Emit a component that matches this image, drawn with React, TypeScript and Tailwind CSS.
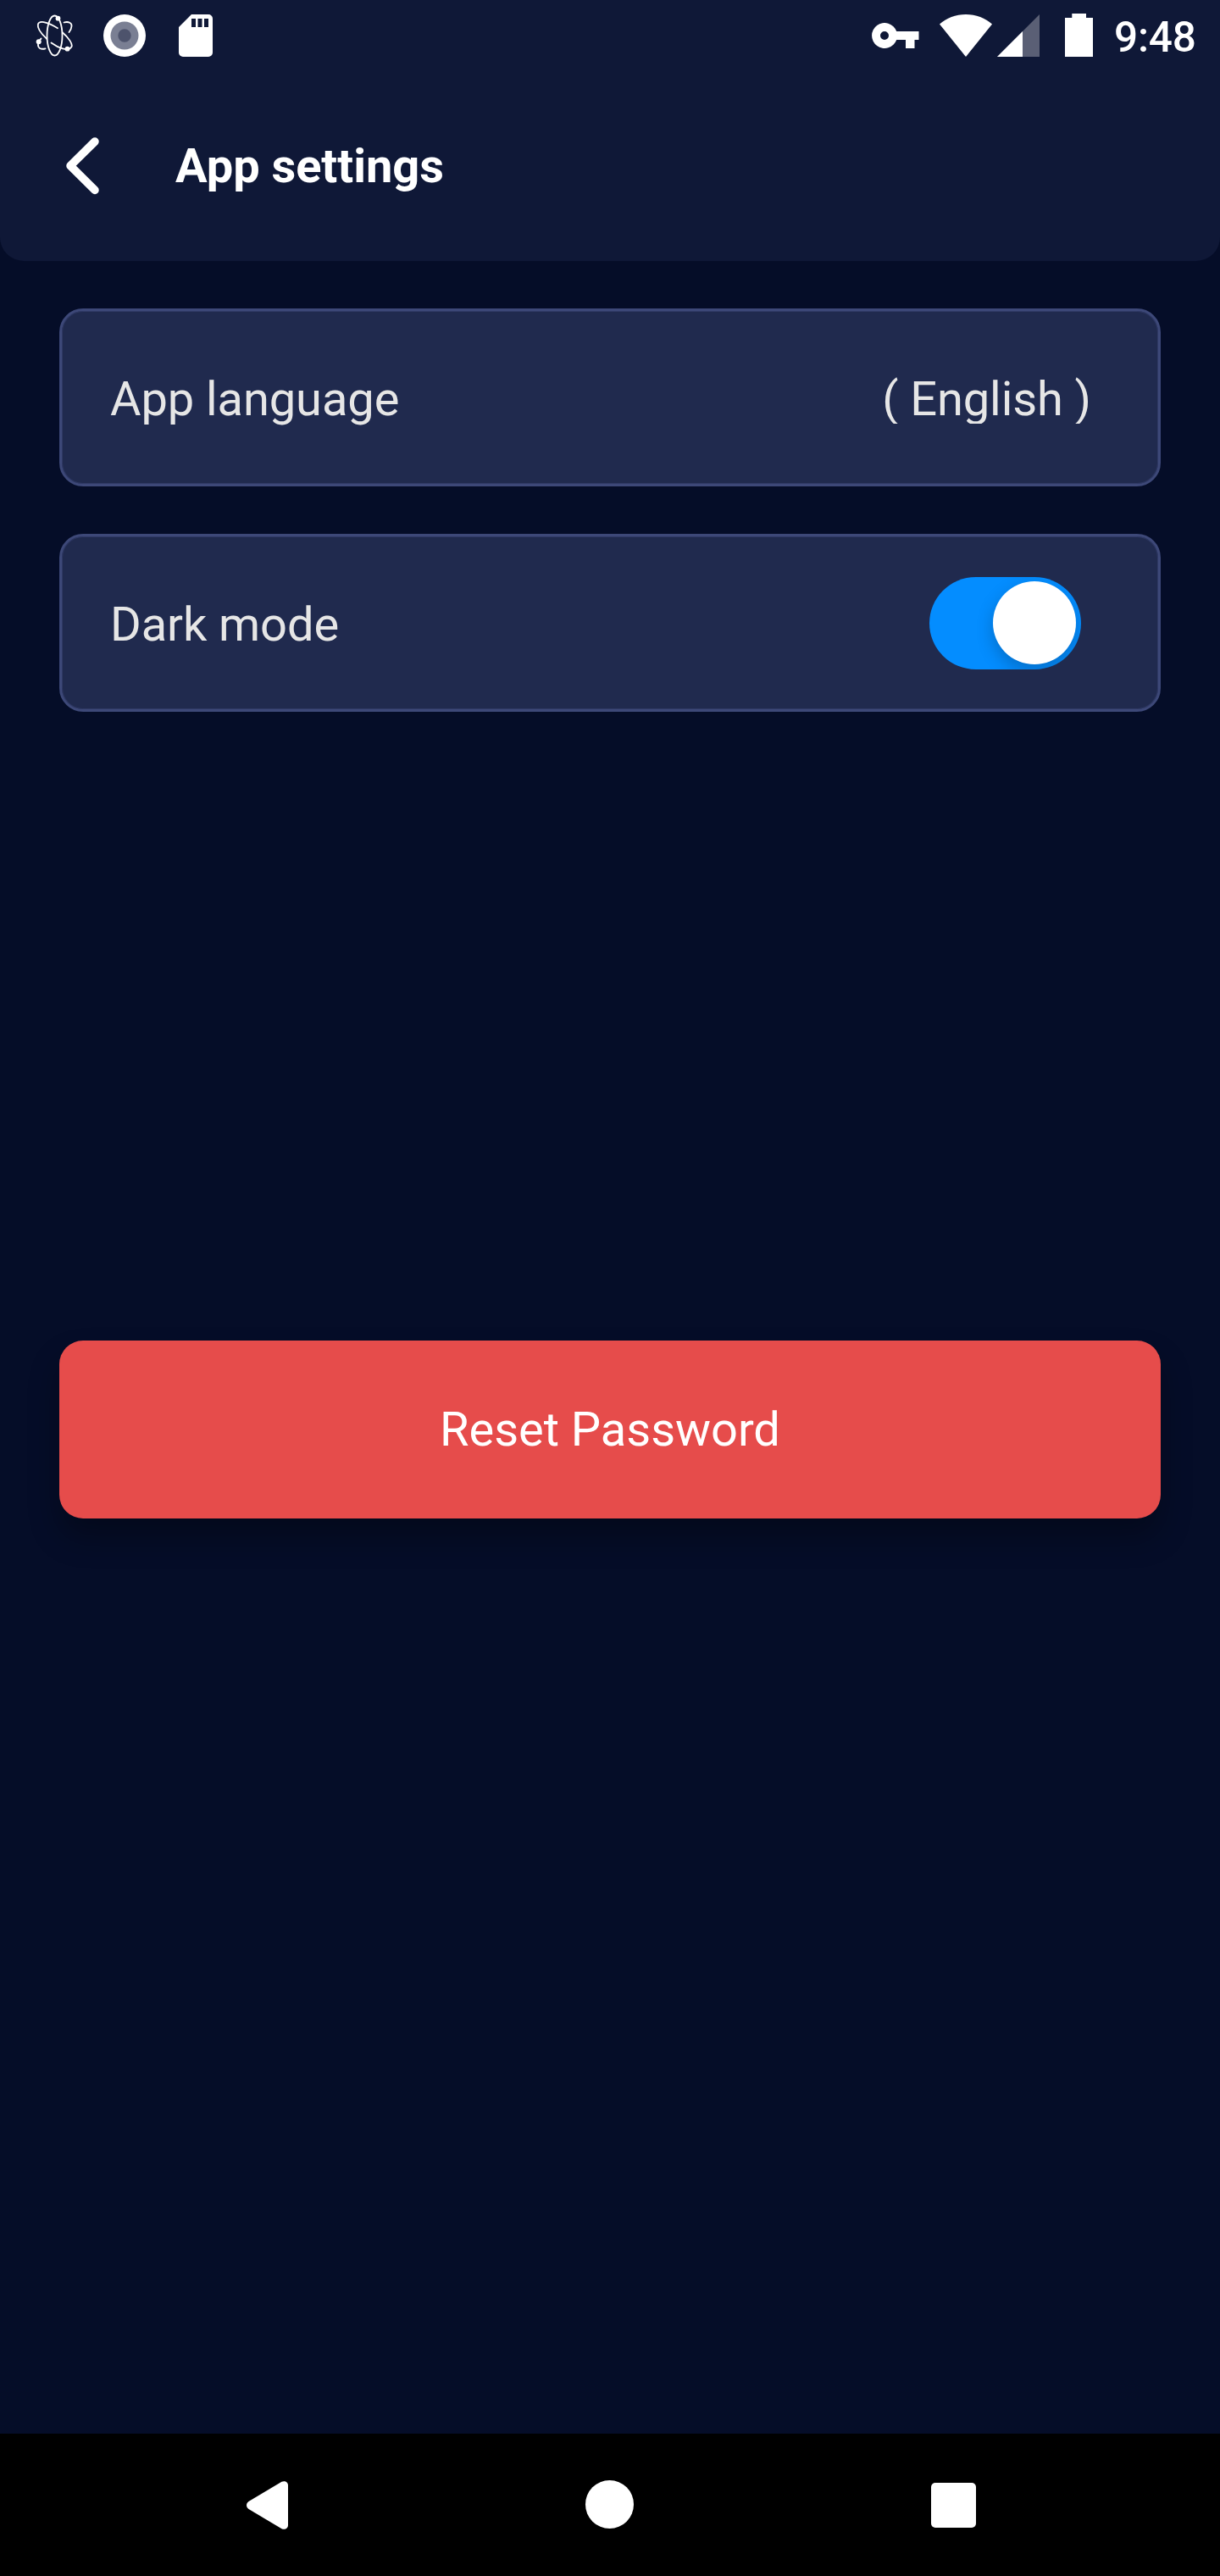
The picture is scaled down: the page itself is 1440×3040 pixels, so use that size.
import { useState } from "react";
import type { ReactNode } from "react";

function AtomIcon() {
  return (
    <svg width="44" height="50" viewBox="42 17 44 50" fill="none" stroke="#fff" strokeWidth="1.8" strokeLinecap="round">
      <ellipse cx="64.5" cy="42" rx="9" ry="23.5" />
      <path d="M68 33.3C59 27.5 46.5 22.5 44.8 29C43.8 34 49 40 55 45.7" />
      <path d="M75.5 26.5C81 25 85 27 84.5 31C84.3 34 83 36 81.5 38" />
      <path d="M74 38.5C81 44.5 86 52 84.5 55C81 62 68 56 60.5 50.5" />
      <path d="M48.5 45.5C44 50 44 55 47 57C49 58 51 58 53.5 57.3" />
      <g fill="#fff" stroke="none">
        <circle cx="68.5" cy="21.7" r="2.9" />
        <circle cx="45.7" cy="49.3" r="3" />
        <circle cx="79.5" cy="57.7" r="2.9" />
      </g>
    </svg>
  );
}

function RecordIcon() {
  return (
    <svg width="50" height="50" viewBox="0 0 50 50">
      <circle cx="25" cy="25" r="25" fill="#fff" />
      <circle cx="25" cy="25" r="16.5" fill="#7a7f93" />
      <circle cx="25" cy="25" r="7.7" fill="#4d536c" />
    </svg>
  );
}

function SdCardIcon() {
  return (
    <svg width="40" height="50" viewBox="0 0 40 50" fill="#fff">
      <path
        fillRule="evenodd"
        d="M15 0H35A5 5 0 0 1 40 5V45A5 5 0 0 1 35 50H5A5 5 0 0 1 0 45V15ZM15 5V15H20V5ZM22.5 5V15H27.5V5ZM30 5V15H35V5Z"
      />
    </svg>
  );
}

function KeyIcon() {
  return (
    <svg width="56" height="30" viewBox="0 0 56 30" fill="#fff">
      <path
        fillRule="evenodd"
        d="M29.2 10A15 15 0 1 0 29.2 20H40V30H50.5V20H55.5V10ZM15 20A5 5 0 1 1 15 10A5 5 0 0 1 15 20Z"
      />
    </svg>
  );
}

function WifiIcon() {
  return (
    <svg width="62" height="50" viewBox="0 0 62 50" fill="#fff">
      <path d="M31 50L0 11.4C8 4.5 19 0 31 0S54 4.5 62 11.4Z" />
    </svg>
  );
}

function SignalIcon() {
  return (
    <svg width="50" height="50" viewBox="0 0 50 50">
      <path d="M0 50L50 0V50Z" fill="#5a5f75" />
      <path d="M0 50L30 20V50Z" fill="#fff" />
    </svg>
  );
}

function BatteryIcon() {
  return (
    <svg width="33" height="51" viewBox="0 0 33 51" fill="#fff">
      <path d="M8.3 0H25V5H33V51H0V5H8.3Z" />
    </svg>
  );
}

function StatusBar() {
  return (
    <div className="flex h-[84px] items-start">
      <div className="ml-[42px] mt-[17px] flex">
        <AtomIcon />
        <div className="ml-9">
          <RecordIcon />
        </div>
        <div className="ml-[39px]">
          <SdCardIcon />
        </div>
      </div>
      <div className="ml-auto mr-[29px] flex">
        <div className="mt-[27px]">
          <KeyIcon />
        </div>
        <div className="ml-[24px] mt-[17px]">
          <WifiIcon />
        </div>
        <div className="ml-[6px] mt-[17px]">
          <SignalIcon />
        </div>
        <div className="ml-[30px] mt-4">
          <BatteryIcon />
        </div>
        <span className="ml-[25px] mt-[16px] w-[96px] text-[49.5px] leading-[57px] font-medium tracking-[-0.2px] whitespace-nowrap">
          9:48
        </span>
      </div>
    </div>
  );
}

function Header() {
  return (
    <header className="h-[308px] rounded-b-[28px] bg-[#0f1837]">
      <StatusBar />
      <div className="flex h-[224px] items-start">
        <button aria-label="Back" className="mt-[78px] ml-[77px]">
          <svg width="41" height="68" viewBox="0 0 41 68" fill="none" stroke="#fff" strokeWidth="9.5" strokeLinecap="round" strokeLinejoin="round">
            <path d="M35 5L6 33.7L35 62.4" />
          </svg>
        </button>
        <h1 className="mt-[79px] ml-[89px] text-[56px] leading-[66px] font-bold tracking-[-0.05px] whitespace-nowrap">App settings</h1>
      </div>
    </header>
  );
}

function SettingRow({ label, children }: { label: string; children: ReactNode }) {
  return (
    <div className="flex h-[210px] items-center rounded-[28px] border-[3px] border-[#3d4878] bg-[#202a4e] pl-[57px] text-[56px] leading-[66px] tracking-[-0.08px] text-[#e6e6e6] shadow-[inset_0_0_0_1px_#2f3965]">
      <span className="mt-[3px]">{label}</span>
      <div className="ml-auto">{children}</div>
    </div>
  );
}

function Toggle({ on, onToggle }: { on: boolean; onToggle: () => void }) {
  return (
    <button
      role="switch"
      aria-checked={on}
      aria-label="Dark mode"
      onClick={onToggle}
      className={
        "mr-[91px] flex h-[109px] w-[179px] items-center overflow-hidden rounded-full px-[6px] " +
        (on ? "justify-end bg-[#048dff]" : "justify-start bg-[#5a5f75]")
      }
    >
      <span className="size-[98px] rounded-full bg-white shadow-[0_8px_20px_rgba(0,0,0,0.22)]" />
    </button>
  );
}

function NavBar() {
  return (
    <nav className="flex h-[168px] items-start bg-black">
      <svg className="mt-[56px] ml-[291px]" width="49" height="57" viewBox="0 0 49 57" fill="#fff">
        <path d="M41.5 0.8C45 -1 49 1 49 5V52C49 56 45 58 41.5 56.2L2.5 33C-0.8 31 -0.8 26 2.5 24Z" />
      </svg>
      <span className="mt-[55px] ml-[351px] size-[57px] rounded-full bg-white" />
      <span className="mt-[58px] ml-[351px] size-[53px] rounded-[5px] bg-white" />
    </nav>
  );
}

export default function App() {
  const [dark, setDark] = useState(true);
  return (
    <div className="flex h-[3040px] w-[1440px] flex-col bg-[#050d28] font-[Roboto,sans-serif] text-white">
      <Header />
      <main className="flex flex-1 flex-col gap-14 px-[70px] pt-14">
        <SettingRow label="App language">
          <span className="mr-[79px] block h-[62px] overflow-hidden">( English )</span>
        </SettingRow>
        <SettingRow label="Dark mode">
          <Toggle on={dark} onToggle={() => setDark(!dark)} />
        </SettingRow>
        <button className="mt-[686px] h-[210px] rounded-[28px] bg-[#e64c4b] text-[56px] leading-[66px] tracking-[-0.04px] shadow-[0_22px_36px_rgba(0,0,0,0.3)]">
          Reset Password
        </button>
      </main>
      <NavBar />
    </div>
  );
}
